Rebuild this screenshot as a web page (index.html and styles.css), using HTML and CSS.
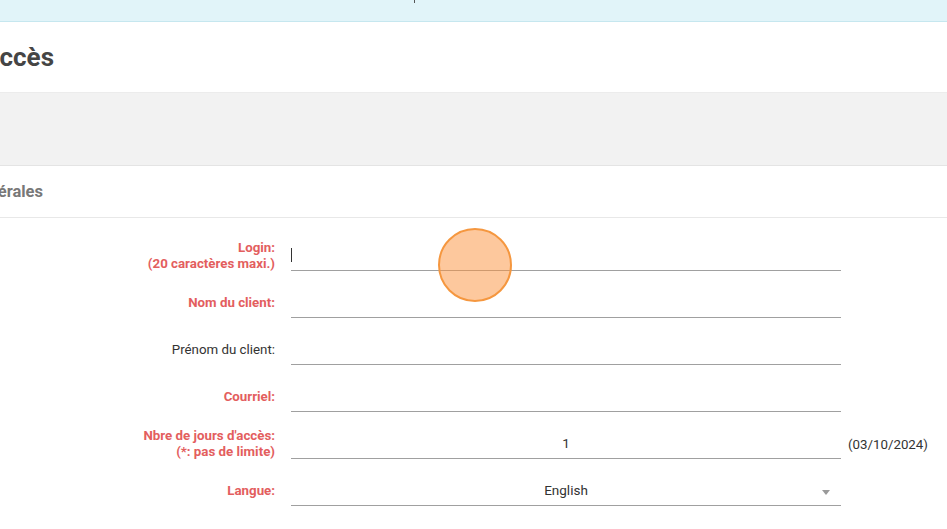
FILE: index.html
```html
<!DOCTYPE html>
<html lang="fr">
<head>
<meta charset="utf-8">
<title>Accès</title>
<link rel="stylesheet" href="styles.css">
</head>
<body>
<div class="topbar"><span class="topmark"></span></div>
<header class="titlebar">
  <div class="crop title-crop"><h1 class="title">Nouvel accès</h1></div>
</header>
<div class="band"></div>
<div class="section-head">
  <div class="crop section-crop"><h2 class="section-title">Informations générales</h2></div>
</div>
<form class="form">
  <label class="lbl req">Login:<br>(20 caractères maxi.)</label>
  <div class="field"><span class="caret"></span></div>
  <div class="extra"></div>

  <label class="lbl req">Nom du client:</label>
  <div class="field"></div>
  <div class="extra"></div>

  <label class="lbl">Prénom du client:</label>
  <div class="field"></div>
  <div class="extra"></div>

  <label class="lbl req">Courriel:</label>
  <div class="field"></div>
  <div class="extra"></div>

  <label class="lbl req">Nbre de jours d'accès:<br>(*: pas de limite)</label>
  <div class="field center">1</div>
  <div class="extra">(03/10/2024)</div>

  <label class="lbl req">Langue:</label>
  <div class="field center select">English<span class="arrow"></span></div>
  <div class="extra"></div>

  <label class="lbl">Téléphone:</label>
  <div class="field"></div>
  <div class="extra"></div>
</form>
<div class="click-dot"></div>
</body>
</html>
```
FILE: styles.css
```css
* { box-sizing: border-box; }
html, body {
  margin: 0;
  padding: 0;
  background: #ffffff;
  overflow: hidden;
  font-family: Roboto, "Liberation Sans", sans-serif;
  color: #333;
}
body { width: 947px; height: 529px; position: relative; }

.topbar {
  height: 22px;
  background: #e1f4f9;
  border-bottom: 1px solid #c6e7ef;
  display: flex;
  padding-left: 414px;
}
.topmark {
  width: 1px;
  height: 3px;
  background: #555;
}

.titlebar {
  height: 70px;
  display: flex;
  align-items: center;
}
.crop {
  display: flex;
  justify-content: flex-end;
  overflow: hidden;
  white-space: nowrap;
}
.title-crop { width: 54px; }
.title {
  margin: 0;
  font-size: 26px;
  font-weight: 700;
  color: #454545;
  flex: none;
}

.band {
  height: 74px;
  background: #f2f2f2;
  border-top: 1px solid #ececec;
  border-bottom: 1px solid #e4e4e4;
}

.section-head {
  height: 52px;
  display: flex;
  align-items: center;
  border-bottom: 1px solid #e8e8e8;
}
.section-crop { width: 43px; }
.section-title {
  margin: 0;
  font-size: 16.5px;
  font-weight: 700;
  color: #787878;
  flex: none;
}

.form {
  display: grid;
  grid-template-columns: 275px 566px 1fr;
  grid-auto-rows: 30px;
  row-gap: 17px;
  padding-top: 23px;
}
.lbl {
  grid-column: 1;
  text-align: right;
  font-size: 13.3px;
  line-height: 16px;
  color: #333;
  align-self: center;
}
.lbl.req {
  color: #e35e5e;
  font-weight: 700;
}
.field {
  grid-column: 2;
  margin-left: 16px;
  padding-bottom: 2px;
  border-bottom: 1px solid #a0a0a0;
  display: flex;
  align-items: center;
  font-size: 13.5px;
  color: #333;
  position: relative;
}
.field.center { justify-content: center; }
.caret {
  width: 1px;
  height: 14px;
  background: #333;
}
.arrow {
  position: absolute;
  right: 11px;
  top: 14px;
  width: 0;
  height: 0;
  border-left: 4px solid transparent;
  border-right: 4px solid transparent;
  border-top: 5px solid #9a9a9a;
}
.extra {
  grid-column: 3;
  margin-left: 7px;
  display: flex;
  align-items: center;
  font-size: 13.3px;
  color: #333;
  white-space: nowrap;
}

.click-dot {
  position: absolute;
  left: 438px;
  top: 228px;
  width: 74px;
  height: 74px;
  border-radius: 50%;
  background: rgba(251, 146, 60, 0.5);
  border: 2px solid #f5973f;
}
```
